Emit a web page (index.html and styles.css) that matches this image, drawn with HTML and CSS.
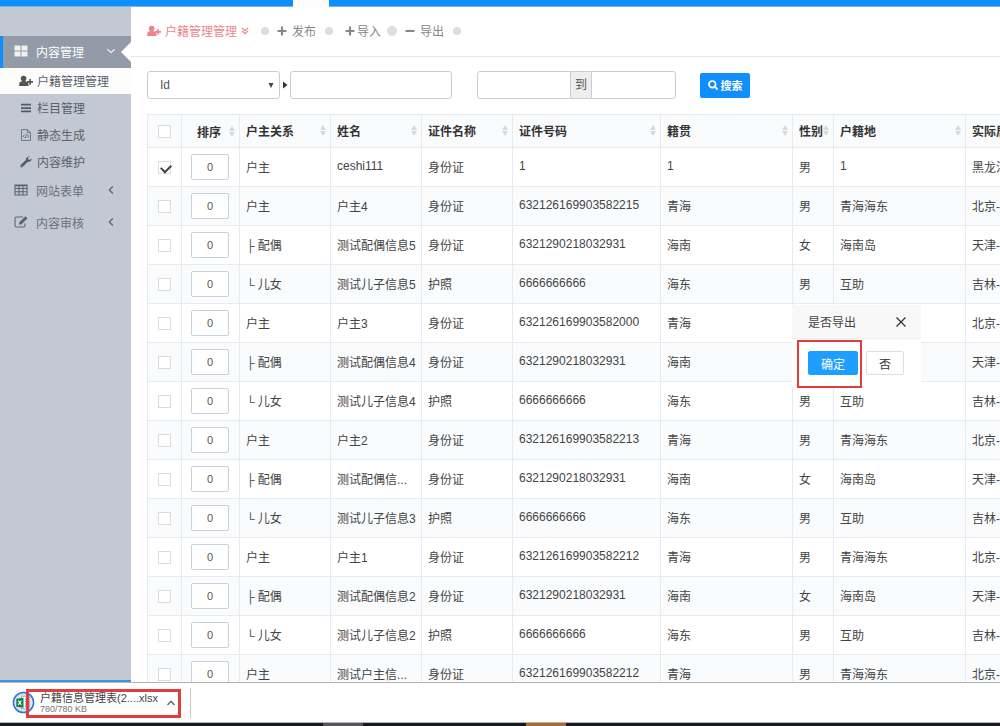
FILE: index.html
```html
<!DOCTYPE html>
<html lang="zh-CN">
  <head>
    <title>户籍管理管理</title>
    <meta charset="utf-8">
    <link rel="stylesheet" href="styles.css">
  </head>
  <body>
    <div class="topbar"><span class="topbar-tab"></span></div>

    <div class="main">
      <nav class="sidebar">
        <a href="#" class="menu open">
          <svg class="menu-icon" viewBox="0 0 14 14"><path d="M.5 1.500h6v5h-6zM7.500 1.500h6v5h-6zM.5 7.500h6v5h-6zM7.500 7.500h6v5h-6z" fill="#f4f1ea"/></svg>
          <span class="menu-text">内容管理</span>
          <svg class="caret" viewBox="0 0 10 10"><path d="M1.500 3.200L5 6.700l3.500-3.500" fill="none" stroke="#eee" stroke-width="1.300"/></svg>
        </a>
        <div class="submenu">
          <a href="#" class="current">
            <svg viewBox="0 0 14 12"><path d="M4.600.8a2.800 2.800 0 0 1 2.800 2.800c0 1.200-.5 2-1.200 2.600 1.700.4 3.200 1 3.300 2.700V11H.2V8.900c.1-1.700 1.400-2.300 3-2.700-.8-.6-1.400-1.400-1.400-2.600A2.800 2.800 0 0 1 4.600.8zM10.300 4h1.600v2.100H14v1.600h-2.100v2.100h-1.600V7.700H8.200V6.100h2.100z" fill="#555"/></svg>
            户籍管理管理
          </a>
          <a href="#">
            <svg viewBox="0 0 14 12"><path d="M2 1.800h10v1.700H2zM2 5.200h10v1.700H2zM2 8.600h10v1.700H2z" fill="#555d66"/></svg>
            栏目管理
          </a>
          <a href="#">
            <svg viewBox="0 0 14 12"><path d="M2.500.6h6L11.500 3.500v8h-9zM8.300.6v3h3M5.700 5.500L4.200 7.200l1.500 1.700M8.300 5.500l1.500 1.700-1.500 1.700M7.500 5.200l-1 4" fill="none" stroke="#666f78" stroke-width=".9"/></svg>
            静态生成
          </a>
          <a href="#">
            <svg viewBox="0 0 14 12"><path d="M12.400 2.500l-2 1.500-1.300-.9.100-1.700L11 .6C9 0 6.700 1.300 6.900 3.900L1.600 9a1.400 1.400 0 0 0 2 2l5.200-5.200c2.600.5 4.200-1.300 3.600-3.300zM2.800 10.600a.6.600 0 1 1 0-1.200.6.600 0 0 1 0 1.200z" fill="#555d66"/></svg>
            内容维护
          </a>
        </div>
        <a href="#" class="menu">
          <svg class="menu-icon" viewBox="0 0 14 14"><path d="M1 2h12v10H1zM1 5.500h12M1 8.700h12M5 3v9M9 3v9M1 2.800h12" fill="none" stroke="#5c656e" stroke-width="1.100"/></svg>
          <span class="menu-text">网站表单</span>
          <svg class="caret" viewBox="0 0 10 10"><path d="M6.800 1.500L3.300 5l3.500 3.500" fill="none" stroke="#5a626b" stroke-width="1.200"/></svg>
        </a>
        <a href="#" class="menu">
          <svg class="menu-icon" viewBox="0 0 14 14"><path d="M9 2H2.500A1.500 1.500 0 0 0 1 3.500v7A1.500 1.500 0 0 0 2.500 12h7a1.500 1.500 0 0 0 1.500-1.500V8.500" fill="none" stroke="#5c656e" stroke-width="1.100"/><path d="M11.500 1.300l2 2L7.300 9.500H5.100V7.500z" fill="#5c656e"/></svg>
          <span class="menu-text">内容审核</span>
          <svg class="caret" viewBox="0 0 10 10"><path d="M6.800 1.500L3.300 5l3.500 3.500" fill="none" stroke="#5a626b" stroke-width="1.200"/></svg>
        </a>
      </nav>

      <div class="content">
        <div class="toolbar">
          <a href="#" class="title">
            <svg class="user" viewBox="0 0 14 12"><path d="M4.600.8a2.800 2.800 0 0 1 2.800 2.800c0 1.200-.5 2-1.200 2.600 1.700.4 3.200 1 3.300 2.700V11H.2V8.900c.1-1.700 1.400-2.300 3-2.700-.8-.6-1.400-1.400-1.400-2.600A2.800 2.800 0 0 1 4.600.8zM10.300 4h1.600v2.100H14v1.600h-2.100v2.100h-1.600V7.700H8.200V6.100h2.100z" fill="#ec858b"/></svg>
            户籍管理管理
            <svg class="down" viewBox="0 0 8 8"><path d="M1 1l3 2.700L7 1M1 4l3 2.700L7 4" fill="none" stroke="#ec858b" stroke-width="1.200"/></svg>
          </a>
          <i class="dot"></i>
          <a href="#"><svg class="sign" viewBox="0 0 10 10"><path d="M3.900.5h2.200v3.400h3.400v2.200H6.100v3.400H3.900V6.100H.5V3.900h3.400z" fill="#888"/></svg>发布</a>
          <i class="dot"></i>
          <a href="#" class="import"><svg class="sign" viewBox="0 0 10 10"><path d="M3.900.5h2.200v3.400h3.400v2.200H6.100v3.400H3.900V6.100H.5V3.900h3.400z" fill="#888"/></svg>导入</a>
          <i class="dot big"></i>
          <a href="#"><svg class="sign" viewBox="0 0 10 10"><path d="M.5 3.900h9v2.100h-9z" fill="#888"/></svg>导出</a>
          <i class="dot"></i>
        </div>

        <form class="search">
          <div class="select-box">
            <select aria-label="字段"><option>Id</option></select>
            <svg class="select-arrow" viewBox="0 0 6 5"><path d="M.5 0h5L3 5z" fill="#444"/></svg>
          </div>
          <svg class="play" viewBox="0 0 5 8"><path d="M0 .5L4.500 4 0 7.500z" fill="#333"/></svg>
          <input type="text" class="keyword" aria-label="关键字">
          <div class="range">
            <input type="text" class="from" aria-label="开始">
            <span>到</span>
            <input type="text" class="to" aria-label="结束">
          </div>
          <button type="button" class="search-btn">
            <svg viewBox="0 0 10 10"><circle cx="4.300" cy="4.300" r="3.300" fill="none" stroke="#fff" stroke-width="1.700"/><path d="M6.600 6.600L9.500 9.500" stroke="#fff" stroke-width="2"/></svg>
            搜索
          </button>
        </form>

        <table class="grid">
          <colgroup>
            <col class="c-check"><col class="c-sort"><col class="c-mid"><col class="c-mid"><col class="c-mid">
            <col class="c-number"><col class="c-wide"><col class="c-sex"><col class="c-wide"><col class="c-wide">
          </colgroup>
          <thead>
            <tr>
              <th class="center"><input type="checkbox" aria-label="全选"></th>
              <th class="center"><div>排序<i class="sort"></i></div></th>
              <th><div>户主关系<i class="sort"></i></div></th>
              <th><div>姓名<i class="sort"></i></div></th>
              <th><div>证件名称<i class="sort"></i></div></th>
              <th><div>证件号码<i class="sort"></i></div></th>
              <th><div>籍贯<i class="sort"></i></div></th>
              <th><div>性别<i class="sort"></i></div></th>
              <th><div>户籍地<i class="sort"></i></div></th>
              <th><div>实际居住地<i class="sort"></i></div></th>
            </tr>
          </thead>
          <tbody id="rows"></tbody>
        </table>
      </div>

      <div class="dialog" role="dialog" aria-label="是否导出">
        <div class="dialog-title">
          是否导出
          <button type="button" class="close" aria-label="关闭"><svg viewBox="0 0 12 12"><path d="M1.500 1.500l9 9M10.500 1.500l-9 9" stroke="#333" stroke-width="1.300"/></svg></button>
        </div>
        <div class="dialog-btns">
          <button type="button" class="yes">确定</button>
          <button type="button" class="no">否</button>
        </div>
        <span class="mark"></span>
      </div>
    </div>

    <div class="downloads">
      <svg class="file-icon" viewBox="0 0 24 24">
        <circle cx="12" cy="12" r="10.500" fill="#d6e6f8" stroke="#2f78d8" stroke-width="1.600"/>
        <path d="M10 5.500h8v13h-8z" fill="#fff" stroke="#888" stroke-width=".7"/>
        <path d="M13.500 8.500h3M13.500 11h3M13.500 13.500h3M13.500 16h3" stroke="#3c9a62" stroke-width="1.100"/>
        <path d="M4.500 8l7.500-1v10.500l-7.500-1z" fill="#15804a"/>
        <path d="M6.500 10l3.300 4.500M9.800 10l-3.300 4.500" stroke="#fff" stroke-width="1.100"/>
      </svg>
      <div class="file">
        <div class="file-name">户籍信息管理表(2....xlsx</div>
        <div class="file-size">780/780 KB</div>
      </div>
      <svg class="up" viewBox="0 0 10 10"><path d="M1.500 7L5 3.300 8.500 7" fill="none" stroke="#666" stroke-width="1.400"/></svg>
      <span class="mark"></span>
    </div>
    <div class="taskbar"><i class="task"></i><i class="task hot"></i></div>

    <script src="script.js"></script>
  </body>
</html>
```
FILE: styles.css
```css
* {
  box-sizing: border-box;
}

body {
  margin: 0;
  height: 100vh;
  display: flex;
  flex-direction: column;
  overflow: hidden;
  font-family: "Liberation Sans", "Noto Sans CJK SC", sans-serif;
  font-size: 12px;
  color: #444;
  background: #fff;
}

a {
  color: inherit;
  text-decoration: none;
}

input, select, button {
  font: inherit;
  color: #555;
  margin: 0;
}

svg {
  display: block;
  flex: none;
}

.topbar {
  flex: none;
  height: 7px;
  padding-left: 293px;
  background: #108ffc;
  border-bottom: 1px solid #6fb6f0;
}

.topbar-tab {
  display: block;
  width: 36px;
  height: 7px;
  background: #fdfdfd;
}

.main {
  flex: 1;
  min-height: 0;
  display: flex;
  position: relative;
  overflow: hidden;
}

/* sidebar */
.sidebar {
  flex: none;
  width: 131px;
  padding-top: 29px;
  background: #c2c9d2;
  border-bottom: 2px solid #3a94e8;
  color: #6a7178;
}

.menu {
  display: flex;
  align-items: center;
  height: 32px;
  padding: 0 15px 2px 14px;
  position: relative;
}

.menu.open {
  padding-left: 11px;
  border-left: 3px solid #108ffc;
  background: #929ba7;
  color: #fff;
}

.menu.open::after {
  content: "";
  position: absolute;
  right: 0;
  top: 6px;
  border: 10px solid transparent;
  border-right-color: #fff;
  border-left: 0;
}

.menu-icon {
  width: 14px;
  height: 14px;
}

.menu-text {
  flex: 1;
  margin-left: 8px;
}

.caret {
  width: 10px;
  height: 10px;
}

.submenu {
  display: flex;
  flex-direction: column;
  gap: 1px;
}

.submenu a {
  display: flex;
  align-items: center;
  gap: 4px;
  height: 26px;
  padding: 0 0 1px 19px;
  color: #5a6168;
}

.submenu a.current {
  background: #fdfdfd;
}

.submenu svg {
  width: 14px;
  height: 12px;
}

/* toolbar */
.content {
  flex: 1;
  min-width: 0;
  overflow: hidden;
}

.toolbar {
  display: flex;
  align-items: center;
  height: 50px;
  padding: 0 16px 2px;
  border-bottom: 1px solid #e6e8ea;
  color: #888;
}

.toolbar a {
  display: flex;
  align-items: center;
  gap: 5px;
  margin: 0 9px 0 8px;
}

.toolbar .title {
  gap: 4px;
  margin: 0 12px 0 0;
  color: #ec858b;
}

.toolbar .import {
  gap: 2px;
  margin: 0 6px 0 12px;
}

.user {
  width: 14px;
  height: 12px;
}

.down {
  width: 8px;
  height: 8px;
}

.sign {
  width: 10px;
  height: 10px;
}

.dot {
  width: 8px;
  height: 8px;
  border-radius: 50%;
  background: #ddd;
}

.dot.big {
  width: 10px;
  height: 10px;
}

/* search */
.search {
  display: flex;
  align-items: center;
  padding: 14px 16px 15px;
}

.search input,
.search select {
  height: 28px;
  padding: 0 12px;
  border: 1px solid #c9cdd6;
  border-radius: 3px;
  background: #fff;
}

.select-box {
  position: relative;
  width: 133px;
}

.search select {
  width: 100%;
  appearance: none;
}

.select-arrow {
  position: absolute;
  right: 6px;
  top: 12px;
  width: 6px;
  height: 5px;
}

.play {
  width: 5px;
  height: 8px;
  margin: 0 2px 0 3px;
}

.search .keyword {
  width: 162px;
}

.range {
  display: flex;
  margin: 0 24px 0 25px;
}

.range span {
  width: 20px;
  height: 28px;
  line-height: 26px;
  text-align: center;
  color: #555;
  background: #eee;
  border: solid #c9cdd6;
  border-width: 1px 0;
}

.range .from {
  width: 94px;
  border-radius: 3px 0 0 3px;
}

.range .to {
  width: 85px;
  border-radius: 0 3px 3px 0;
}

.search-btn {
  display: flex;
  align-items: center;
  justify-content: center;
  gap: 3px;
  width: 50px;
  height: 25px;
  padding: 0;
  border: 0;
  border-radius: 2px;
  background: #108ffc;
  color: #fff;
  font-size: 11px;
  font-weight: bold;
}

.search-btn svg {
  width: 10px;
  height: 10px;
}

/* table */
.grid {
  width: 951px;
  margin-left: 16px;
  table-layout: fixed;
  border-collapse: collapse;
}

.c-check { width: 34px; }
.c-sort { width: 58px; }
.c-mid { width: 91px; }
.c-number { width: 148px; }
.c-wide { width: 132px; }
.c-sex { width: 41px; }

.grid th,
.grid td {
  height: 39px;
  padding: 0 4px 2px 6px;
  border: 1px solid #e7eaee;
  text-align: left;
  white-space: nowrap;
  overflow: hidden;
}

.grid th {
  height: 33px;
  background: #fafbfd;
  color: #333;
}

.grid th div {
  display: flex;
  align-items: center;
  justify-content: space-between;
}

.grid .center {
  padding: 0 4px 0 3px;
  text-align: center;
}

.grid th.center div {
  padding-left: 12px;
}

.grid tbody tr:nth-child(even) {
  background: #fafbfd;
}

.grid input[type=checkbox] {
  display: block;
  width: 13px;
  height: 13px;
  margin: 0 auto;
  appearance: none;
  border: 1px solid #dcdcdc;
  background: #fff;
}

.grid input[type=checkbox]:checked::after {
  content: "";
  display: block;
  width: 8px;
  height: 5px;
  margin: 2px;
  border: solid #444;
  border-width: 0 0 2px 2px;
  transform: rotate(-45deg);
}

.grid input[type=text] {
  display: block;
  width: 38px;
  height: 26px;
  margin: 0 auto;
  padding: 0;
  border: 1px solid #ccd0da;
  border-radius: 2px;
  background: #fff;
  font-size: 11px;
  text-align: center;
}

.sort {
  display: flex;
  flex-direction: column;
  gap: 1px;
}

.sort::before,
.sort::after {
  content: "";
  border: 3px solid transparent;
}

.sort::before {
  border-bottom: 5px solid #d8d8d8;
  border-top: 0;
}

.sort::after {
  border-top: 5px solid #d8d8d8;
  border-bottom: 0;
}

/* export dialog */
.dialog {
  position: absolute;
  left: 792px;
  top: 298px;
  width: 129px;
  background: #fff;
}

.dialog-title {
  display: flex;
  align-items: center;
  justify-content: space-between;
  height: 34px;
  padding: 0 14px 0 16px;
  background: #f8f8f8;
  border-bottom: 1px solid #eee;
}

.close {
  padding: 0;
  border: 0;
  background: none;
}

.close svg {
  width: 12px;
  height: 12px;
}

.dialog-btns {
  display: flex;
  gap: 8px;
  padding: 12px 16px;
}

.dialog-btns button {
  height: 24px;
  padding: 0;
  border: 1px solid #dedede;
  border-radius: 2px;
  background: #fff;
  color: #333;
}

.dialog-btns .yes {
  flex: none;
  width: 50px;
  border-color: #1e9fff;
  background: #1e9fff;
  color: #fff;
}

.dialog-btns .no {
  flex: none;
  width: 38px;
}

.mark {
  position: absolute;
  border: 2px solid #e23c3c;
}

.dialog .mark {
  left: 5px;
  top: 35px;
  width: 65px;
  height: 48px;
}

/* download shelf */
.downloads {
  flex: none;
  display: flex;
  align-items: center;
  height: 41px;
  padding-left: 12px;
  position: relative;
  border-top: 1px solid #b4b4b4;
  border-bottom: 1px solid #b4b4b4;
  background: #fff;
}

.file-icon {
  width: 23px;
  height: 23px;
}

.file {
  width: 126px;
  margin-left: 5px;
}

.file-name {
  font-size: 11px;
  line-height: 14px;
}

.file-size {
  font-size: 9px;
  line-height: 9px;
  color: #777;
}

.up {
  width: 10px;
  height: 10px;
}

.downloads::after {
  content: "";
  height: 30px;
  margin-left: 14px;
  border-left: 1px solid #ccc;
}

.downloads .mark {
  left: 26px;
  top: 6px;
  width: 155px;
  height: 29px;
  border-width: 3px;
}

.taskbar {
  flex: none;
  display: flex;
  gap: 163px;
  height: 3px;
  padding-left: 323px;
  background: #18181f;
}

.task {
  width: 40px;
  background: #55555a;
}

.task.hot {
  background: #b06a30;
}
```
FILE: script.js
```js
// relation, name, id type, id number, native place, sex, registered place, residence
var people = [
  ['户主', 'ceshi111', '身份证', '1', '1', '男', '1', '黑龙江-哈尔滨'],
  ['户主', '户主4', '身份证', '632126169903582215', '青海', '男', '青海海东', '北京-北京市'],
  ['├ 配偶', '测试配偶信息5', '身份证', '6321290218032931', '海南', '女', '海南岛', '天津-天津市'],
  ['└ 儿女', '测试儿子信息5', '护照', '6666666666', '海东', '男', '互助', '吉林-长春市'],
  ['户主', '户主3', '身份证', '632126169903582000', '青海', '男', '青海海东', '北京-北京市'],
  ['├ 配偶', '测试配偶信息4', '身份证', '6321290218032931', '海南', '女', '海南岛', '天津-天津市'],
  ['└ 儿女', '测试儿子信息4', '护照', '6666666666', '海东', '男', '互助', '吉林-长春市'],
  ['户主', '户主2', '身份证', '632126169903582213', '青海', '男', '青海海东', '北京-北京市'],
  ['├ 配偶', '测试配偶信...', '身份证', '6321290218032931', '海南', '女', '海南岛', '天津-天津市'],
  ['└ 儿女', '测试儿子信息3', '护照', '6666666666', '海东', '男', '互助', '吉林-长春市'],
  ['户主', '户主1', '身份证', '632126169903582212', '青海', '男', '青海海东', '北京-北京市'],
  ['├ 配偶', '测试配偶信息2', '身份证', '6321290218032931', '海南', '女', '海南岛', '天津-天津市'],
  ['└ 儿女', '测试儿子信息2', '护照', '6666666666', '海东', '男', '互助', '吉林-长春市'],
  ['户主', '测试户主信...', '身份证', '632126169903582212', '青海', '男', '青海海东', '北京-北京市']
];

document.getElementById('rows').innerHTML = people.map(function(p, i) {
  return '<tr>' +
    '<td class="center"><input type="checkbox" aria-label="选择"' + (i === 0 ? ' checked' : '') + '></td>' +
    '<td class="center"><input type="text" value="0" aria-label="排序"></td>' +
    p.map(function(v) { return '<td>' + v + '</td>'; }).join('') +
    '</tr>';
}).join('');
```
